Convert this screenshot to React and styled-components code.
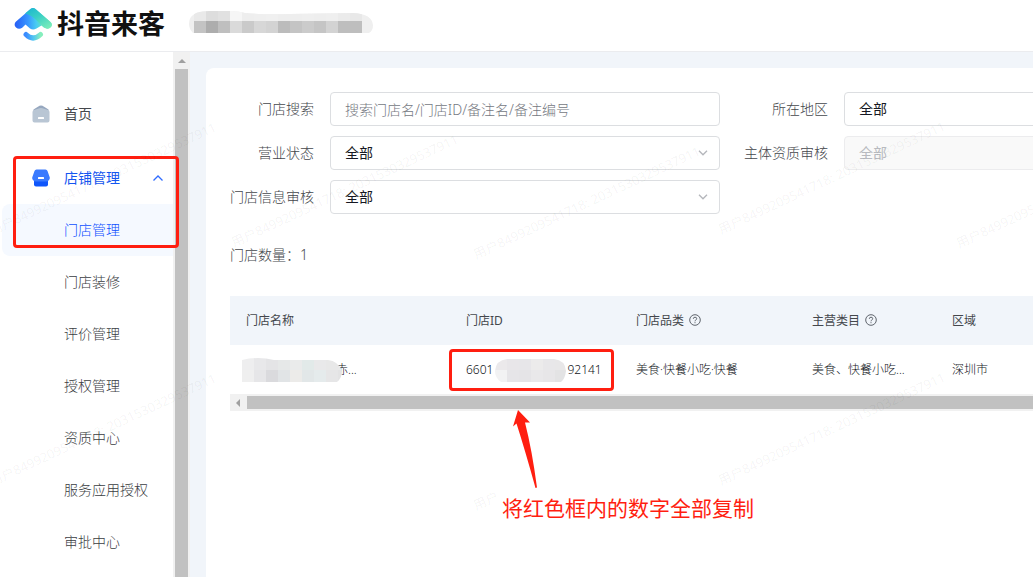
import React, { useState } from 'react';
import styled, { createGlobalStyle } from 'styled-components';

const menu = ['门店管理', '门店装修', '评价管理', '授权管理', '资质中心', '服务应用授权', '审批中心'];

const userMark = '用户8499209541718: 2031530329537911';

const marks = [
  { x: -10, y: 224, text: userMark },
  { x: 232, y: 236, text: userMark },
  { x: 474, y: 248, text: userMark },
  { x: 719, y: 223, text: userMark },
  { x: 957, y: 237, text: userMark },
  { x: -10, y: 475, text: userMark },
  { x: 719, y: 474, text: userMark },
  { x: 474, y: 499, text: '用户' },
];

const headerTop = ['#e9e9e9', '#dddddd', '#e1e1e1', '#f6f6f6', '#eeeeee', '#efefef', '#f0f0f0', '#eeeeee', '#eeeeee', '#efefef', '#eeeeee', '#efefef', '#ebebeb', '#e8e8e8'];
const headerBottom = ['#c3c3c3', '#adadad', '#bfbfbf', '#dadada', '#cacaca', '#d7d7d7', '#d3d3d3', '#bcbcbc', '#c4c4c4', '#cbcbcb', '#c5c5c5', '#d3d3d3', '#bebebe', '#bebebe'];
const nameTop = ['#eeeeef', '#e8e8ea', '#e4e4e6', '#e6e8e8', '#eaebeb', '#e2eae9', '#e9e9ea', '#e8e8e8', '#e9e9e9'];
const nameBottom = ['#efefef', '#e6e6e8', '#dadadd', '#e1e4e6', '#ecebe9', '#e2e7e8', '#e5ebec', '#e6e6e7', '#e3e3e4'];
const idTop = ['#ebe9eb', '#e8e6e9', '#e7e6e9', '#ecebeb', '#e8e7e9', '#e8e7e8'];
const idBottom = ['#f2f2f3', '#e6e5e8', '#e5e4e7', '#e9e8ea', '#e7e6e8', '#e3e3e4'];

export default function App() {
  const [search, setSearch] = useState('');

  return (
    <Page>
      <GlobalStyle />
      <Header>
        <Logo />
        <Brand>抖音来客</Brand>
        <HeaderMosaic />
      </Header>

      <Body>
        <Sidebar>
          <MenuItem href="#home">
            <HomeIcon />
            首页
          </MenuItem>
          <MenuGroup>
            <MenuItem href="#shop" $active>
              <ShopIcon />
              店铺管理
              <Chevron up color="#2f6bff" />
            </MenuItem>
            {menu.map((name, i) => (
              <SubItem key={name} href={'#menu' + i} $active={i === 0}>{name}</SubItem>
            ))}
            <MenuFrame />
          </MenuGroup>
        </Sidebar>
        <ScrollbarY>
          <Arrow points="5,11 9,7 13,11" />
          <ThumbY />
        </ScrollbarY>

        <Content>
          <Panel>
            <Filters>
              <Label htmlFor="search">门店搜索</Label>
              <Input id="search" value={search} onChange={e => setSearch(e.target.value)} placeholder="搜索门店名/门店ID/备注名/备注编号" />
              <Label htmlFor="area">所在地区</Label>
              <Field id="area" />
              <Label htmlFor="status">营业状态</Label>
              <Field id="status" />
              <Label htmlFor="subject">主体资质审核</Label>
              <Field id="subject" disabled />
              <Label htmlFor="info">门店信息审核</Label>
              <Field id="info" />
            </Filters>

            <Count>门店数量：1</Count>

            <Store>
              <TableWrap>
                <Table>
                  <colgroup>
                    <Col $w={220} />
                    <Col $w={170} />
                    <Col $w={176} />
                    <Col $w={140} />
                    <Col $w={180} />
                  </colgroup>
                  <thead>
                    <tr>
                      <Th>门店名称</Th>
                      <Th>门店ID</Th>
                      <Th>门店品类<HelpIcon /></Th>
                      <Th>主营类目<HelpIcon /></Th>
                      <Th>区域</Th>
                    </tr>
                  </thead>
                  <tbody>
                    <tr>
                      <Td>
                        <Masked $indent={90}>
                          赤...
                          <Mosaic $left={-4} width="100" height="24" viewBox="0 0 100 24">
                            <clipPath id="nameClip"><path d="M0 2Q16-2 32 2H86Q96 3 100 13Q100 20 95 24H0Z" /></clipPath>
                            <Cells top={nameTop} bottom={nameBottom} split={12} clip="nameClip" />
                          </Mosaic>
                        </Masked>
                      </Td>
                      <Td>
                        <IdFrame />
                        <Masked>
                          6601
                          <IdTail>92141</IdTail>
                          <Mosaic $left={29} width="71" height="24" viewBox="0 0 71 24">
                            <clipPath id="idClip"><path d="M12 1H59Q70 2 71 13Q70 21 66 24H6Q0 20 0 13Q1 2 12 1Z" /></clipPath>
                            <Cells top={idTop} bottom={idBottom} split={12} clip="idClip" />
                          </Mosaic>
                        </Masked>
                      </Td>
                      <Td>美食·快餐小吃·快餐</Td>
                      <Td>美食、快餐小吃...</Td>
                      <Td>深圳市</Td>
                    </tr>
                  </tbody>
                </Table>
              </TableWrap>
              <ScrollbarX>
                <Arrow points="10,5 6,9 10,13" />
                <ThumbX />
              </ScrollbarX>
              <Callout>
                <Pointer width="26" height="80" viewBox="0 0 26 80">
                  <path d="M6 0L18 12.500L13 12.500Q20 40 25 77.500L23.500 78Q13 40 4.500 13.500L1 16.500Z" fill="#ff1e10" />
                </Pointer>
                将红色框内的数字全部复制
              </Callout>
            </Store>
          </Panel>
        </Content>
      </Body>

      <Watermarks aria-hidden="true">
        {marks.map(m => (
          <Mark key={m.x + '-' + m.y} style={{ left: m.x, top: m.y }}>{m.text}</Mark>
        ))}
      </Watermarks>
    </Page>
  );
}

function Logo() {
  return (
    <svg width="40" height="36" viewBox="0 0 40 36">
      <defs>
        <linearGradient id="roof" x1="0" y1="0.8" x2="1" y2="0.8">
          <stop offset="0" stopColor="#275df5" />
          <stop offset="0.35" stopColor="#3795ff" />
          <stop offset="0.58" stopColor="#48ccf2" />
          <stop offset="0.75" stopColor="#62e0c4" />
          <stop offset="1" stopColor="#86f2b6" />
        </linearGradient>
        <linearGradient id="peak" x1="0.2" y1="0" x2="1" y2="1">
          <stop offset="0" stopColor="#1fb9cf" />
          <stop offset="0.4" stopColor="#3bd0c5" />
          <stop offset="1" stopColor="#84f0b8" />
        </linearGradient>
        <linearGradient id="smile" x1="0" y1="0" x2="1" y2="0">
          <stop offset="0" stopColor="#3b8bff" />
          <stop offset="0.5" stopColor="#4fc4f3" />
          <stop offset="1" stopColor="#86eebd" />
        </linearGradient>
      </defs>
      <path d="M2.500 16L17.500 3Q20 1 22.500 3L37.500 16Q40 18.500 38 21Q35 24 31 21.500L28.500 19.500L23.500 22.500Q20 24.500 17 22.500L12.500 18.500L9.500 21.500Q6 24 3 21.500Q0.500 19 2.500 16Z" fill="url(#roof)" />
      <path d="M12 7.500L17.500 3Q20 1 22.500 3L37.500 16Q40 18.500 38 21Q35 24 31 21.500L21 12Q16 8 12 7.500Z" fill="url(#peak)" />
      <path d="M13 28.500Q20 35.500 27.500 28.500" fill="none" stroke="url(#smile)" strokeWidth="5" strokeLinecap="round" />
    </svg>
  );
}

function HomeIcon() {
  return (
    <svg width="18" height="18" viewBox="0 0 18 18">
      <path d="M1.500 4.500L7.500 0.800Q9 0 10.500 0.800L16.500 4.500V8H1.500Z" fill="#96a7bf" />
      <path d="M0.500 7Q0.500 5.500 2 5L7.500 3.300Q9 2.800 10.500 3.300L16 5Q17.500 5.500 17.500 7V15.500Q17.500 17.500 15.500 17.500H2.500Q0.500 17.500 0.500 15.500Z" fill="#b9c6d4" />
      <rect x="6" y="12" width="6" height="2" rx="0.5" fill="#fff" />
    </svg>
  );
}

function ShopIcon() {
  return (
    <svg width="18" height="18" viewBox="0 0 18 18">
      <path d="M2 9H16V15.500Q16 17.500 14 17.500H4Q2 17.500 2 15.500Z" fill="#0f56fb" />
      <path d="M4.500 0.500H13.500Q15 0.500 15.500 2L17.800 8.500Q18 10 17 11Q16 12.500 14 12.500H4Q2 12.500 1 11Q0 10 0.200 8.500L2.500 2Q3 0.500 4.500 0.500Z" fill="#3a7afe" />
      <rect x="6" y="8" width="6" height="2" rx="0.5" fill="#fff" />
    </svg>
  );
}

function HelpIcon() {
  return (
    <Help width="12" height="12" viewBox="0 0 12 12" fill="none" stroke="#5f646c">
      <circle cx="6" cy="6" r="5.300" />
      <path d="M4.300 4.800Q4.400 3.200 6 3.200Q7.700 3.200 7.700 4.700Q7.700 5.500 6.800 6Q6 6.400 6 7.300M6 8.200V9.200" />
    </Help>
  );
}

function Chevron({ up, color }) {
  return (
    <ChevronSvg width="10" height="6" viewBox="0 0 10 6" fill="none" stroke={color}>
      <path d={up ? 'M0.500 5.500L5 1L9.500 5.500' : 'M1 0.800L5 4.800L9 0.800'} strokeWidth="1.300" />
    </ChevronSvg>
  );
}

function Arrow({ points }) {
  return (
    <svg width="17" height="17" viewBox="0 0 17 17">
      <polygon points={points} fill="#a0a0a0" />
    </svg>
  );
}

function Field({ id, disabled }) {
  return (
    <SelectBox>
      <Select id={id} disabled={disabled}>
        <option>全部</option>
      </Select>
      <Chevron color="#b4b6bb" />
    </SelectBox>
  );
}

function Cells({ top, bottom, split, clip, x = 0 }) {
  return (
    <g clipPath={`url(#${clip})`} shapeRendering="crispEdges">
      {top.map((c, i) => <rect key={i} x={x + i * 12} y="0" width="12" height={split} fill={c} />)}
      {bottom.map((c, i) => <rect key={i} x={x + i * 12} y={split} width="12" height="12" fill={c} />)}
    </g>
  );
}

function HeaderMosaic() {
  return (
    <svg width="184" height="26" viewBox="0 0 184 26">
      <clipPath id="headClip">
        <path d="M0 13Q0 2 14 0.500Q40-2 56 2Q80 4 100 3L165 2Q183 3 184 14Q184 20 180 22H4Q0 18 0 13Z" />
      </clipPath>
      <rect width="184" height="22" fill="#efefef" clipPath="url(#headClip)" />
      <Cells top={headerTop} bottom={headerBottom} split={10} clip="headClip" x={5} />
    </svg>
  );
}

const GlobalStyle = createGlobalStyle`
  * {
    box-sizing: border-box;
  }
  body {
    margin: 0;
    background: #fff;
    font-family: "Noto Sans", "Noto Sans CJK SC", sans-serif;
    font-size: 14px;
    line-height: 20px;
    font-weight: 300;
    color: #44474c;
  }
`;

const Page = styled.div`
  position: relative;
  display: flex;
  flex-direction: column;
  min-height: 100vh;
  overflow: hidden;
`;

const Header = styled.header`
  display: flex;
  align-items: center;
  height: 52px;
  padding: 0 13px 4px;
  border-bottom: 1px solid #ebecef;
`;

const Brand = styled.h1`
  margin: 0 24px 0 4px;
  font-size: 27px;
  line-height: 36px;
  font-weight: 700;
  color: #111;
`;

const Body = styled.div`
  display: flex;
  flex: 1;
`;

const Sidebar = styled.nav`
  flex: none;
  width: 173px;
  padding: 36px 0 9px 2px;
`;

const MenuGroup = styled.div`
  position: relative;
  margin-top: 12px;
`;

const MenuItem = styled.a`
  display: flex;
  align-items: center;
  gap: 14px;
  height: 52px;
  padding: 0 10px 0 30px;
  font-weight: 400;
  color: ${props => props.$active ? '#1456f0' : '#44474c'};
  text-decoration: none;
`;

const SubItem = styled.a`
  display: flex;
  align-items: center;
  height: 52px;
  padding-left: 62px;
  border-radius: 8px 0 0 8px;
  background: ${props => props.$active ? '#f5f9ff' : 'none'};
  color: ${props => props.$active ? '#0f50ff' : '#3a3d42'};
  text-decoration: none;
`;

const Frame = styled.div`
  position: absolute;
  border: 3px solid #ff1e10;
  border-radius: 4px;
  pointer-events: none;
`;

const MenuFrame = styled(Frame)`
  top: 4px;
  left: 11px;
  right: -6px;
  height: 92px;
`;

const IdFrame = styled(Frame)`
  top: 4px;
  left: -1px;
  width: 165px;
  height: 42px;
`;

const ScrollbarY = styled.div`
  display: flex;
  flex-direction: column;
  flex: none;
  width: 17px;
  background: #f1f1f1;
`;

const ThumbY = styled.div`
  flex: 1;
  margin: 0 2px;
  background: #c1c1c1;
`;

const ScrollbarX = styled.div`
  display: flex;
  height: 17px;
  background: #f1f1f1;
`;

const ThumbX = styled.div`
  flex: 1;
  margin: 2px 0;
  background: #c1c1c1;
`;

const Content = styled.main`
  flex: 1;
  display: flex;
  min-width: 0;
  padding: 16px 0 0 16px;
  background: #f1f5fa;
`;

const Panel = styled.section`
  flex: 1;
  min-width: 0;
  padding: 24px 0 24px 24px;
  border-radius: 8px 0 0 0;
  background: #fff;
`;

const Filters = styled.form`
  display: grid;
  grid-template-columns: 84px 390px 92px 390px;
  gap: 10px 16px;
  align-items: center;
`;

const Label = styled.label`
  text-align: right;
  white-space: nowrap;
`;

const Input = styled.input`
  width: 100%;
  height: 34px;
  padding: 0 14px;
  border: 1px solid #dcdee1;
  border-radius: 4px;
  outline: none;
  background: #fff;
  font: inherit;
  color: #161823;
  &::placeholder {
    color: #75787f;
    opacity: 1;
  }
  &:focus {
    border-color: #1456f0;
  }
`;

const SelectBox = styled.div`
  position: relative;
`;

const Select = styled.select`
  display: block;
  width: 100%;
  height: 34px;
  padding: 0 14px;
  border: 1px solid #dcdee1;
  border-radius: 4px;
  outline: none;
  appearance: none;
  background: #fff;
  font: inherit;
  font-weight: 400;
  color: #161823;
  &:disabled {
    border-color: #ececee;
    background: #f9f9f9;
    color: #b8babf;
    opacity: 1;
  }
`;

const ChevronSvg = styled.svg`
  margin-left: auto;
  ${SelectBox} & {
    position: absolute;
    top: 14px;
    right: 12px;
    pointer-events: none;
  }
`;

const Count = styled.p`
  margin: 30px 0;
  line-height: 22px;
`;

const Store = styled.div`
  position: relative;
`;

const TableWrap = styled.div`
  overflow: hidden;
`;

const Table = styled.table`
  width: 886px;
  table-layout: fixed;
  border-collapse: collapse;
  font-size: 12px;
  line-height: 18px;
`;

const Col = styled.col`
  width: ${props => props.$w}px;
`;

const Th = styled.th`
  height: 49px;
  padding: 0 16px;
  background: #f1f5fa;
  font-weight: 400;
  text-align: left;
`;

const Td = styled.td`
  position: relative;
  height: 49px;
  padding: 0 16px;
  color: #111419;
  white-space: nowrap;
`;

const Help = styled.svg`
  margin-left: 5px;
  vertical-align: -1px;
`;

const Masked = styled.div`
  position: relative;
  padding-left: ${props => props.$indent || 0}px;
`;

const IdTail = styled.span`
  margin-left: 74px;
`;

const Mosaic = styled.svg`
  position: absolute;
  top: -3px;
  left: ${props => props.$left}px;
`;

const Callout = styled.div`
  position: absolute;
  top: 114px;
  left: 272px;
  padding-top: 82px;
  font-size: 21px;
  line-height: 32px;
  font-weight: 400;
  color: #ff1e10;
  white-space: nowrap;
`;

const Pointer = styled.svg`
  position: absolute;
  top: 0;
  left: 10px;
`;

const Watermarks = styled.div`
  position: absolute;
  inset: 0;
  overflow: hidden;
  pointer-events: none;
`;

const Mark = styled.span`
  position: absolute;
  transform: rotate(-25deg);
  transform-origin: 0 50%;
  font-size: 13px;
  line-height: 14px;
  font-weight: 400;
  color: rgba(0, 0, 0, 0.05);
  white-space: nowrap;
`;
